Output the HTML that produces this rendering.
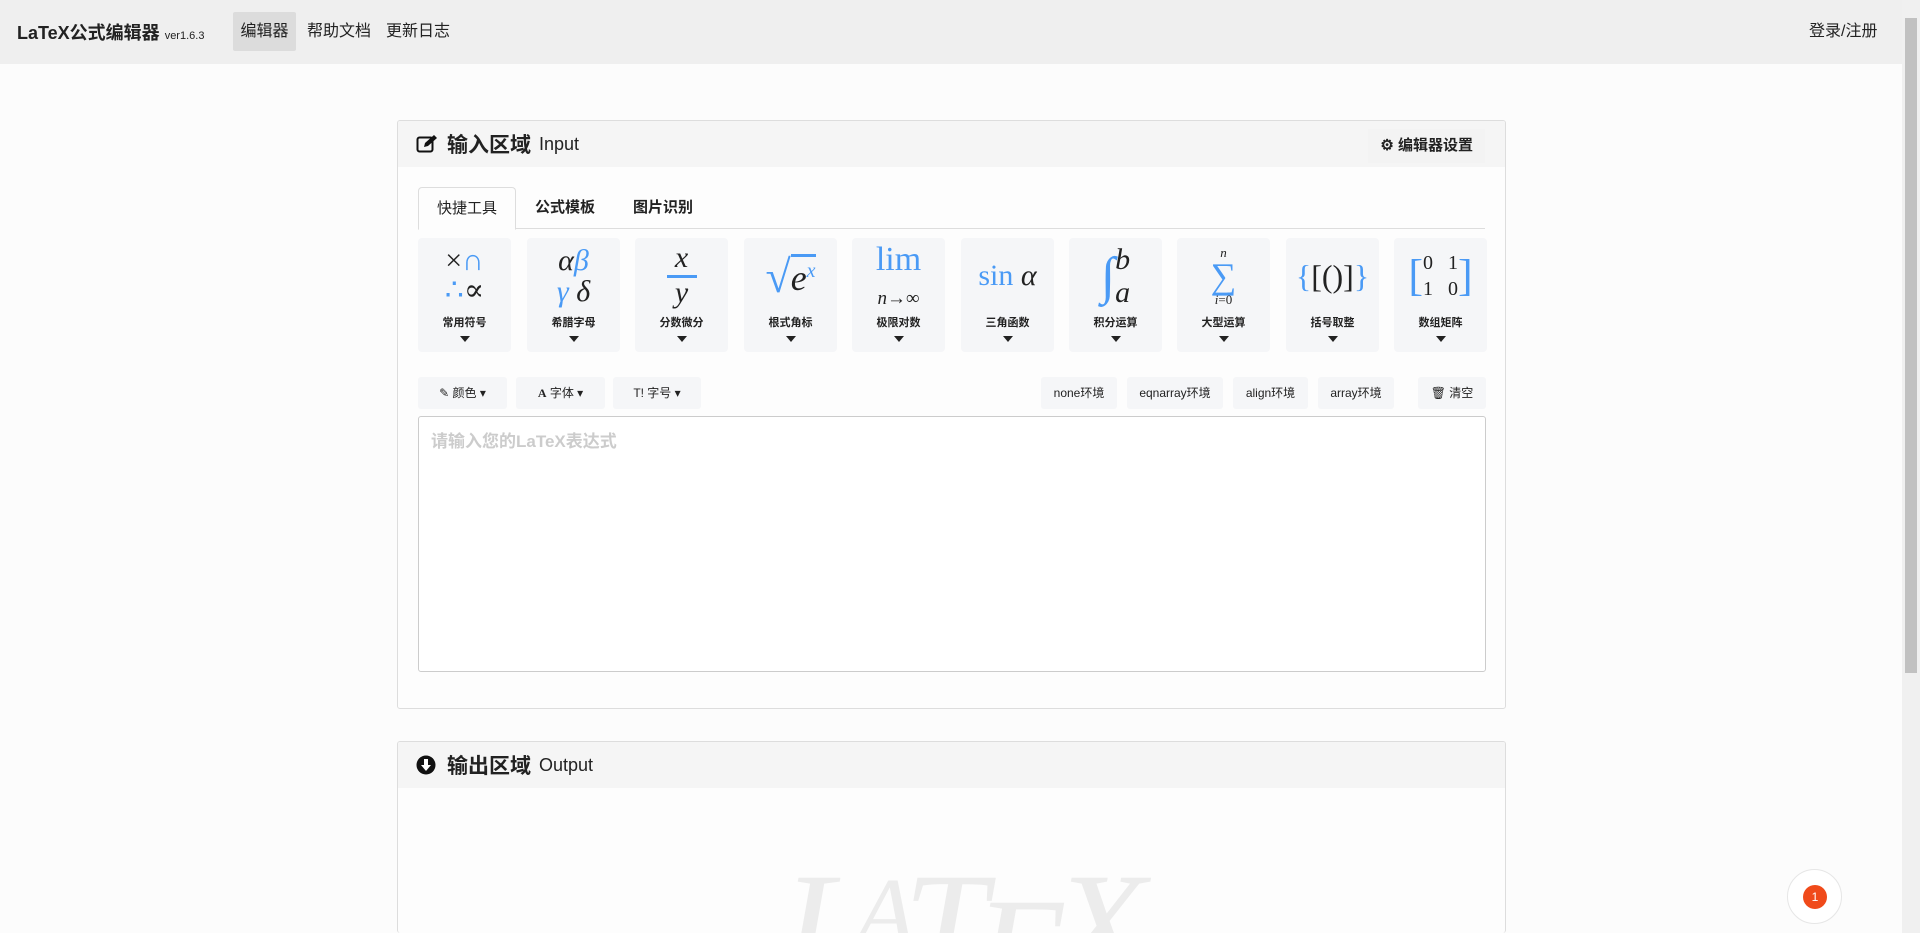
<!DOCTYPE html>
<html style="width:1920px;height:933px;overflow:hidden"><head><meta charset="utf-8"><style>
*{box-sizing:border-box;margin:0;padding:0}
body{width:1920px;height:933px;overflow:hidden;background:#fcfcfc;font-family:"Liberation Sans","Noto Sans CJK SC",sans-serif;color:#222;position:relative}
.nav{position:absolute;left:0;top:0;width:1902px;height:64px;background:#efefef}
.brand{position:absolute;left:17px;top:19px;font-size:18px;font-weight:bold;white-space:nowrap}
.brand small{font-size:11px;font-weight:normal}
.ni{position:absolute;top:12px;height:39px;line-height:39px;font-size:16px;padding:0 9px;white-space:nowrap}
.sb{position:absolute;right:0;top:0;width:18px;height:933px;background:#f0f0f0}
.sb div{position:absolute;left:3px;top:18px;width:12px;height:655px;background:#c1c1c1}
.panel{position:absolute;left:397px;width:1109px;border:1px solid #ddd;border-radius:3px;background:#fdfdfd;overflow:hidden}
.ph{height:46px;background:#f5f5f5;display:flex;align-items:center;padding-left:18px;font-size:21px;font-weight:bold}
.ph span.en{font-weight:normal;font-size:18px;margin-left:8px}
.tabs{position:absolute;left:20px;top:66px;width:1067px;height:42px;border-bottom:1px solid #ddd}
.tab{position:absolute;top:0;height:42px;line-height:42px;font-size:15px;font-weight:bold;text-align:center}
.card{position:absolute;top:117px;width:93px;height:114px;background:#f5f6f8;border-radius:4px;text-align:center;overflow:hidden}
.card .m{height:76px;display:flex;align-items:center;justify-content:center;font-family:"Liberation Serif","DejaVu Serif",serif;font-size:32px}
.card .l{font-size:11px;font-weight:bold;margin-top:0}
.card .t{width:0;height:0;border:5px solid transparent;border-top:6px solid #222;margin:6px auto 0}
.b{color:#4a9af5}
.btn{position:absolute;top:256px;height:32px;line-height:32px;background:#f5f6f8;border-radius:3px;font-size:12px;text-align:center}
.ta{position:absolute;left:20px;top:295px;width:1068px;height:256px;border:1px solid #ccc;border-radius:3px;background:#fff;padding:10px 12px;color:#ccc;font-size:17px;font-weight:bold}
</style></head><body>
<div class="nav">
<div class="brand">LaTeX公式编辑器 <small>ver1.6.3</small></div>
<div class="ni" style="left:233px;width:63px;background:#dcdcdc;border-radius:2px;padding:0;text-align:center">编辑器</div>
<div class="ni" style="left:298px">帮助文档</div>
<div class="ni" style="left:377px">更新日志</div>
<div class="ni" style="left:1800px">登录/注册</div>
</div>
<div class="sb"><div></div></div>

<div class="panel" style="top:120px;height:589px">
<div class="ph"><svg width="22" height="20" viewBox="0 0 22 20" style="margin-right:9px"><rect x="1.5" y="3.5" width="15" height="14" rx="2" fill="none" stroke="#111" stroke-width="2"/><path d="M8 13l1-4 9-8 3 3-9 8z" fill="#111"/></svg>输入区域<span class="en">Input</span>
<div style="position:absolute;right:20px;top:8px;height:34px;line-height:34px;padding:0 12px;font-size:15px;font-weight:bold;background:#f3f3f3">⚙ 编辑器设置</div></div>
<div class="tabs">
<div class="tab" style="left:0;width:98px;border:1px solid #ddd;border-bottom:1px solid #fdfdfd;border-radius:4px 4px 0 0;background:#fdfdfd;font-weight:normal;height:43px">快捷工具</div>
<div class="tab" style="left:98px;width:98px">公式模板</div>
<div class="tab" style="left:196px;width:98px">图片识别</div>
</div>
<div class="card" style="left:20px"><div class="m" style="font-size:30px;line-height:1"><div>×<span class="b">∩</span><br><span class="b">∴</span>∝</div></div><div class="l">常用符号</div><div class="t"></div></div>
<div class="card" style="left:129px"><div class="m" style="font-size:30px;line-height:1.05;font-style:italic"><div>α<span class="b">β</span><br><span class="b">γ</span> δ</div></div><div class="l">希腊字母</div><div class="t"></div></div>
<div class="card" style="left:237px"><div class="m" style="font-size:30px;font-style:italic;line-height:1"><div><div>x</div><div style="border-top:3px solid #4a9af5;width:30px;margin:2px auto">y</div></div></div><div class="l">分数微分</div><div class="t"></div></div>
<div class="card" style="left:346px"><div class="m"><span class="b" style="font-size:46px">√</span><span style="border-top:3px solid #4a9af5;font-style:italic;font-size:36px">e<sup class="b" style="font-size:20px">x</sup></span></div><div class="l">根式角标</div><div class="t"></div></div>
<div class="card" style="left:454px"><div class="m" style="line-height:1"><div><span class="b" style="font-size:34px">lim</span><br><span style="font-size:19px"><i>n</i>→∞</span></div></div><div class="l">极限对数</div><div class="t"></div></div>
<div class="card" style="left:563px"><div class="m" style="font-size:30px"><span class="b">sin</span>&nbsp;<i>α</i></div><div class="l">三角函数</div><div class="t"></div></div>
<div class="card" style="left:671px"><div class="m"><span class="b" style="font-size:52px;font-style:italic">∫</span><span style="font-style:italic;font-size:30px;line-height:1.1">b<br>a</span></div><div class="l">积分运算</div><div class="t"></div></div>
<div class="card" style="left:779px"><div class="m"><div style="line-height:1"><div style="font-size:13px;font-style:italic;height:13px">n</div><div class="b" style="font-size:36px;height:34px;line-height:34px">∑</div><div style="font-size:13px;height:14px"><i>i</i>=0</div></div></div><div class="l">大型运算</div><div class="t"></div></div>
<div class="card" style="left:888px"><div class="m" style="font-size:32px"><span class="b">{</span>[()]<span class="b">}</span></div><div class="l">括号取整</div><div class="t"></div></div>
<div class="card" style="left:996px"><div class="m" style="font-size:20px;line-height:1.3"><span class="b" style="font-size:44px;font-weight:100">[</span><span>0&nbsp;&nbsp;&nbsp;1<br>1&nbsp;&nbsp;&nbsp;0</span><span class="b" style="font-size:44px">]</span></div><div class="l">数组矩阵</div><div class="t"></div></div>
<div class="btn" style="left:20px;width:89px">✎ 颜色 ▾</div>
<div class="btn" style="left:118px;width:89px"><b style="font-family:serif">A</b> 字体 ▾</div>
<div class="btn" style="left:215px;width:88px">T! 字号 ▾</div>
<div class="btn" style="left:643px;width:76px">none环境</div>
<div class="btn" style="left:729px;width:96px">eqnarray环境</div>
<div class="btn" style="left:835px;width:75px">align环境</div>
<div class="btn" style="left:920px;width:76px">array环境</div>
<div class="btn" style="left:1020px;width:68px">🗑 清空</div>
<div class="ta">请输入您的LaTeX表达式</div>
</div>

<div class="panel" style="top:741px;height:192px;border-bottom:none">
<div class="ph"><svg width="20" height="20" viewBox="0 0 20 20" style="margin-right:11px"><circle cx="10" cy="10" r="9.5" fill="#111"/><path d="M8 4h4v6h3l-5 6-5-6h3z" fill="#fff"/></svg>输出区域<span class="en">Output</span></div>
<div style="position:absolute;left:385px;top:98px;font-family:'Liberation Serif',serif;font-style:italic;font-size:150px;color:#ececec;letter-spacing:-12px;white-space:nowrap">L<span style="font-size:100px;vertical-align:30px">A</span>T<span style="vertical-align:-25px">E</span>X</div>
</div>

<div style="position:absolute;left:1787px;top:869px;width:55px;height:55px;border-radius:50%;border:1px solid #e6e6e6;background:#fff"><div style="position:absolute;left:15px;top:15px;width:24px;height:24px;border-radius:50%;background:#f04a1a;color:#fff;font-size:12px;line-height:24px;text-align:center">1</div></div>
</body></html>
